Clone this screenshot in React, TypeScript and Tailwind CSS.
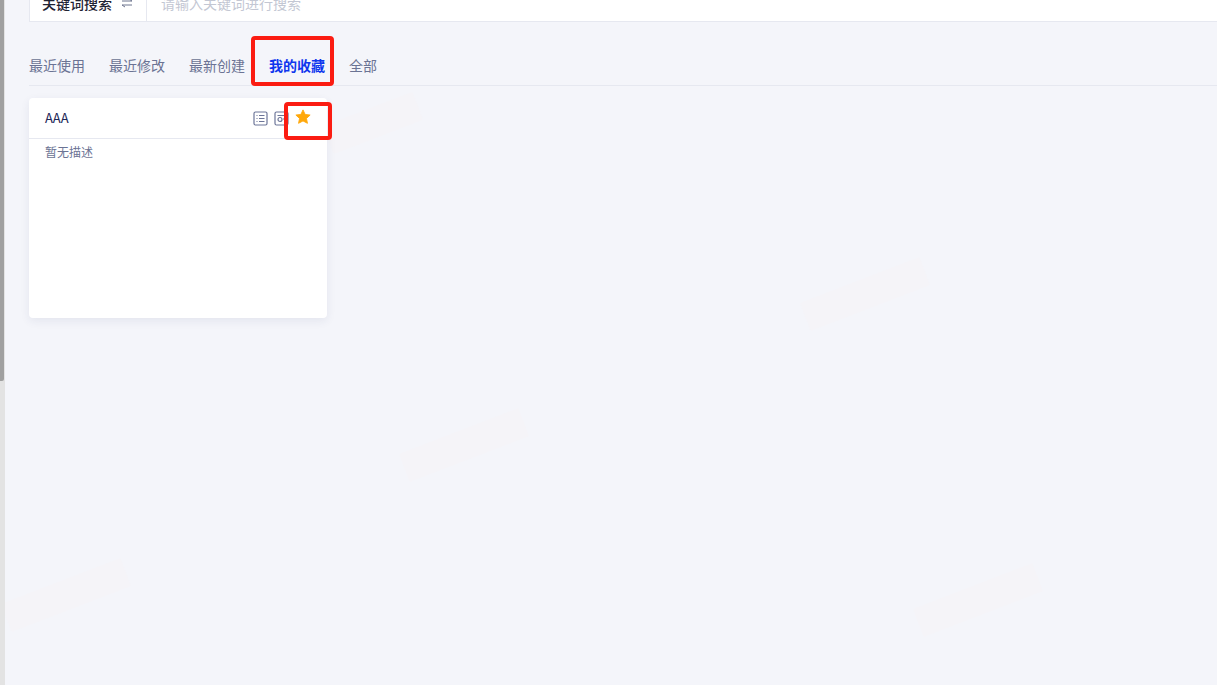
import React from 'react';

const tabs = ['最近使用', '最近修改', '最新创建', '我的收藏', '全部'];

// faint rotated marks behind the content
const watermarks = [
  'left-[325px] top-[108px] w-[96px]',
  'left-[801px] top-[279px] w-[128px]',
  'left-[400px] top-[430px] w-[128px]',
  'left-[2px] top-[580px] w-[128px]',
  'left-[914px] top-[585px] w-[128px]',
];

export default function App() {
  return (
    <div className="relative flex h-[685px] w-[1217px] overflow-hidden bg-[#f4f5fa] font-['Noto_Sans_CJK_SC','Noto_Sans',sans-serif]">
      {/* left scrollbar */}
      <div className="relative z-10 h-full w-[5px] shrink-0 bg-[#e3e3e3]">
        <div className="h-[381px] w-[4px] rounded-br-[2px] bg-[#a0a0a0]" />
      </div>

      {watermarks.map((pos) => (
        <div
          key={pos}
          className={`absolute h-[30px] -rotate-[21deg] rounded-[2px] bg-[#f5f4f8] ${pos}`}
        />
      ))}

      <div className="relative flex-1 pl-[24px]">
        {/* search bar, cut by the top of the window */}
        <div className="-mt-[19px] flex h-[41px] items-stretch border-b border-l border-[#e6e8f0] bg-white">
          <div className="flex w-[117px] items-start gap-[9px] border-r border-[#e6e8f0] pl-[12px] pt-[14px]">
            <span className="text-[14px] font-medium leading-[16px] text-[#1f2333]">关键词搜索</span>
            <svg width="12" height="10" viewBox="0 0 12 10" fill="none" stroke="#6f7690" strokeWidth="1" className="mt-[3px]">
              <path d="M1 3h10L8 1M11 7H1l3 2" />
            </svg>
          </div>
          <span className="pl-[14px] pt-[14px] text-[14px] leading-[16px] text-[#c3c7d3]">请输入关键词进行搜索</span>
        </div>

        {/* tabs */}
        <div className="mt-[24px] flex h-[40px] items-center gap-[24px] border-b border-[#e6e8f0] pb-[1px]">
          {tabs.map((tab) => (
            <span
              key={tab}
              className={
                tab === '我的收藏'
                  ? 'text-[14px] font-bold text-[#0f37ee]'
                  : 'text-[14px] text-[#6b7394]'
              }
            >
              {tab}
            </span>
          ))}
        </div>

        {/* card */}
        <div className="mt-[12px] h-[220px] w-[298px] rounded-[4px] bg-white shadow-[0_3px_10px_rgba(40,50,100,0.08)]">
          <div className="flex h-[41px] items-center justify-between border-b border-[#e6e8f0] pl-[16px] pr-[16px]">
            <span className="-mt-[1px] text-[13px] text-[#1c2556]">AAA</span>
            <div className="flex items-center gap-[6px]">
              <svg width="15" height="15" viewBox="0 0 15 15" fill="none" stroke="#6d7699" strokeWidth="1.2">
                <rect x="1" y="1" width="13" height="13" rx="1.5" />
                <path d="M3.5 4.5h1M6 4.5h5.5M3.5 7.5h1M6 7.5h5.5M3.5 10.5h1M6 10.5h5.5" />
              </svg>
              <svg width="15" height="15" viewBox="0 0 15 15" fill="none" stroke="#6d7699" strokeWidth="1.2">
                <rect x="1" y="1" width="13" height="13" rx="1.5" />
                <path d="M3.5 4.5h8M9 8h3" />
                <circle cx="6" cy="8.5" r="2" />
              </svg>
              <svg width="16" height="16" viewBox="0 0 18 18" className="-mt-[2px]">
                <path
                  d="M9 1l2.4 5.1 5.6.7-4.1 3.8 1.1 5.5L9 13.4l-5 2.7 1.1-5.5L1 6.8l5.6-.7z"
                  fill="#ffa80b"
                  stroke="#ffa80b"
                  strokeLinejoin="round"
                />
              </svg>
            </div>
          </div>
          <p className="pl-[16px] pt-[4px] text-[12px] leading-[18px] text-[#6b7394]">暂无描述</p>
        </div>
      </div>

      {/* red annotation frames */}
      <div className="absolute left-[251px] top-[36px] h-[50px] w-[83px] rounded-[4px] border-[4px] border-[#fb1c12]" />
      <div className="absolute left-[284px] top-[102px] h-[38px] w-[48px] rounded-[4px] border-[4px] border-[#fb1c12]" />
    </div>
  );
}
